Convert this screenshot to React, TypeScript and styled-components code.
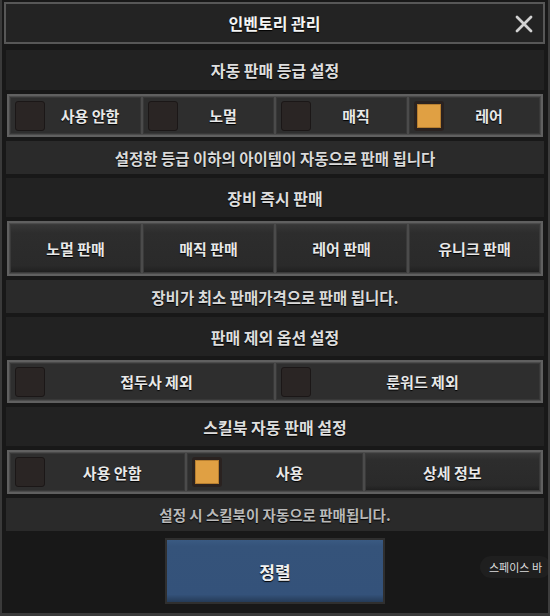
import React from 'react'
import styled, { createGlobalStyle } from 'styled-components'

const GlobalStyle = createGlobalStyle`
    html, body {
        margin: 0;
        padding: 0;
        background: #161616;
    }
    * {
        box-sizing: border-box;
    }
`

const FONT = `"Noto Sans CJK KR", "Noto Sans", sans-serif`

const Window = styled.div`
    position: relative;
    width: 550px;
    height: 616px;
    overflow: hidden;
    display: flex;
    flex-direction: column;
    background: #181818;
    border-left: 2px solid #3a3a3a;
    border-right: 2px solid #3d3d3d;
    border-bottom: 3px solid #3a3a3a;
    font-family: ${FONT};
`
const Header = styled.div`
    display: grid;
    grid-template-columns: 1fr auto 1fr;
    align-items: center;
    height: 42px;
    margin: 2px 3px 0 2px;
    border: 2px solid #575757;
    background: #232323;
`
const Title = styled.div`
    grid-column: 2;
    color: #f4f4f4;
    font-size: 16px;
    font-weight: 700;
    text-shadow: 0 1px 1px #000;
`
const Close = styled.div`
    grid-column: 3;
    justify-self: end;
    display: flex;
    margin-right: 10px;
    margin-top: 1px;
`
const Content = styled.div`
    display: flex;
    flex-direction: column;
    gap: 4px;
    padding: 6px 4px 0 4px;
`
const SectionHeader = styled.div<{ tall?: boolean }>`
    display: flex;
    align-items: center;
    justify-content: center;
    height: ${(props) => (props.tall ? 40 : 39)}px;
    background: #222222;
    color: #dedede;
    font-size: 16px;
    font-weight: 700;
    text-shadow: 0 1px 1px #000;
`
const Row = styled.div<{ cols: number; height?: number }>`
    display: grid;
    grid-template-columns: repeat(${(props) => props.cols}, 1fr);
    gap: 2px;
    height: ${(props) => props.height ?? 43}px;
    margin: 0 1px;
    padding: 1px;
    border: 2px solid #606060;
    background: #4b4b4b;
`
const OptionCell = styled.div`
    display: flex;
    align-items: center;
    padding: 0 6px 0 5px;
    background: #2e2e2e;
    box-shadow: inset 0 0 0 1px #383838;
`
const Check = styled.div<{ checked?: boolean }>`
    flex: none;
    width: 30px;
    height: 30px;
    border-radius: 3px;
    border: ${(props) => (props.checked ? '3px solid #2a2220' : '1px solid #1b1717')};
    background: ${(props) => (props.checked ? '#e0a043' : '#2a2524')};
    box-shadow: ${(props) => (props.checked ? 'inset 0 0 0 1px #b87f30' : 'none')};
`
const Label = styled.div`
    flex: 1;
    text-align: center;
    color: #e8e8e8;
    font-size: 15px;
    font-weight: 700;
    text-shadow: 0 1px 1px #000;
`
const ActionCell = styled.div`
    display: flex;
    align-items: center;
    justify-content: center;
    background: linear-gradient(#383838 0%, #2d2d2d 18%, #2a2a2a 85%, #1e1e1e 100%);
    box-shadow: inset 0 0 0 1px #3a3a3a;
    color: #e8e8e8;
    font-size: 15px;
    font-weight: 700;
    text-shadow: 0 1px 1px #000;
`
const InfoBar = styled.div<{ dim?: boolean }>`
    display: flex;
    align-items: center;
    justify-content: center;
    height: 33px;
    background: #2a2a2a;
    color: ${(props) => (props.dim ? '#b9b9b9' : '#dadada')};
    font-size: ${(props) => (props.dim ? 14.5 : 15.5)}px;
    font-weight: 700;
    text-shadow: 0 1px 1px #000;
`
const Footer = styled.div`
    display: flex;
    justify-content: center;
    padding-top: 7px;
`
const SortButton = styled.div`
    display: flex;
    align-items: center;
    justify-content: center;
    width: 220px;
    height: 66px;
    border: 2px solid #2f2f2f;
    background: linear-gradient(#3a5a82 0%, #35537a 10%, #34527a 88%, #253b57 100%);
    color: #f0f0f0;
    font-size: 17px;
    font-weight: 700;
    text-shadow: 0 1px 1px #000;
`
const Tooltip = styled.div`
    position: absolute;
    left: 478px;
    top: 556px;
    height: 22px;
    padding: 0 9px;
    display: flex;
    align-items: center;
    border-radius: 11px;
    background: #1f1f1f;
    color: #dcdcdc;
    font-size: 11px;
    white-space: nowrap;
`

const CloseIcon = () => (
    <svg width="18" height="18" viewBox="0 0 18 18">
        <path d="M2 2 L16 16 M16 2 L2 16" stroke="#d2d2d2" strokeWidth="2.8" strokeLinecap="round" />
    </svg>
)

const Option = ({ label, checked }: { label: string; checked?: boolean }) => (
    <OptionCell>
        <Check checked={checked} />
        <Label>{label}</Label>
    </OptionCell>
)

export default function App() {
    return (
        <>
            <GlobalStyle />
            <Window>
                <Header>
                    <Title>인벤토리 관리</Title>
                    <Close>
                        <CloseIcon />
                    </Close>
                </Header>
                <Content>
                    <SectionHeader tall>자동 판매 등급 설정</SectionHeader>
                    <Row cols={4}>
                        <Option label="사용 안함" />
                        <Option label="노멀" />
                        <Option label="매직" />
                        <Option label="레어" checked />
                    </Row>
                    <InfoBar>설정한 등급 이하의 아이템이 자동으로 판매 됩니다</InfoBar>

                    <SectionHeader>장비 즉시 판매</SectionHeader>
                    <Row cols={4} height={55}>
                        <ActionCell>노멀 판매</ActionCell>
                        <ActionCell>매직 판매</ActionCell>
                        <ActionCell>레어 판매</ActionCell>
                        <ActionCell>유니크 판매</ActionCell>
                    </Row>
                    <InfoBar>장비가 최소 판매가격으로 판매 됩니다.</InfoBar>

                    <SectionHeader>판매 제외 옵션 설정</SectionHeader>
                    <Row cols={2}>
                        <Option label="접두사 제외" />
                        <Option label="룬워드 제외" />
                    </Row>

                    <SectionHeader>스킬북 자동 판매 설정</SectionHeader>
                    <Row cols={3} height={44}>
                        <Option label="사용 안함" />
                        <Option label="사용" checked />
                        <ActionCell>상세 정보</ActionCell>
                    </Row>
                    <InfoBar dim>설정 시 스킬북이 자동으로 판매됩니다.</InfoBar>
                </Content>
                <Footer>
                    <SortButton>정렬</SortButton>
                </Footer>
                <Tooltip>스페이스 바</Tooltip>
            </Window>
        </>
    )
}
